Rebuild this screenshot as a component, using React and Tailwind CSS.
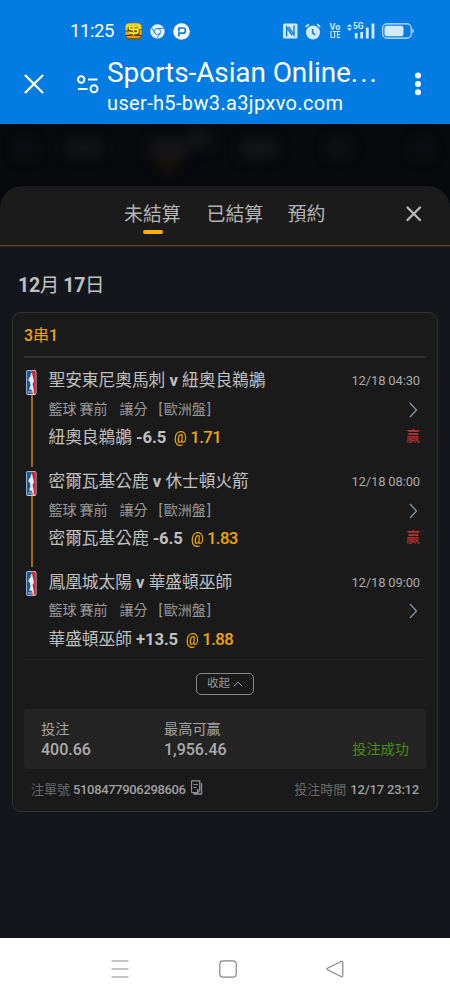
import React from "react";

const legs = [
  { match: "聖安東尼奧馬刺 v 紐奧良鵜鶘", time: "12/18 04:30", team: "紐奧良鵜鶘", line: "-6.5", odds: "1.71", win: true },
  { match: "密爾瓦基公鹿 v 休士頓火箭", time: "12/18 08:00", team: "密爾瓦基公鹿", line: "-6.5", odds: "1.83", win: true },
  { match: "鳳凰城太陽 v 華盛頓巫師", time: "12/18 09:00", team: "華盛頓巫師", line: "+13.5", odds: "1.88", win: false },
];

function NbaLogo() {
  return (
    <svg width="11" height="25" viewBox="0 0 11 25" className="block">
      <rect x="0" y="0" width="10.500" height="25" rx="2.200" fill="#c9d2dd" />
      <path d="M2.300.8H5.500V24.200H2.300Q.7 24.200.7 22.500V2.500Q.7.8 2.300.8z" fill="#1459a6" />
      <path d="M5.500.8H8.300Q9.800.8 9.800 2.500V22.500Q9.800 24.200 8.300 24.200H5.500z" fill="#d4202f" />
      <path d="M4.900 3.500 6.200 3.200 6.700 6 7.700 9.800 7.900 11.500 6.600 14 7.300 17.500 8.300 24H6.900L5.900 19.700 3 19.500 4.500 15.500 4 12 2.300 10.200 3 8 4.500 6.500z" fill="#e8ebef" />
      <path d="M2.400 21v2M3.700 21v2M5 21v2" stroke="#cfdcec" strokeWidth=".6" fill="none" />
    </svg>
  );
}

function StatusBar() {
  return (
    <div className="flex h-[62px] items-center pl-[70px] pr-[36px] text-white">
      <span className="w-[55px] whitespace-nowrap font-['Roboto',sans-serif] text-[18.5px] leading-none tracking-[-0.4px]">11:25</span>
      <svg width="17" height="17" viewBox="0 0 17 17">
        <rect x="0" y="0" width="17" height="16.8" rx="4.5" fill="#7b5a24" />
        <rect x=".5" y=".2" width="16" height="14.3" rx="4" fill="#f5d51e" />
        <path d="M1 8.5h15v3q0 3-3 3H4q-3 0-3-3z" fill="#eaa51d" />
        <path d="M12.500 4H5.800q-2 0-2 1.700t2 1.800h5.500q2 0 2 1.900t-2 2H4" stroke="#43310b" strokeWidth="2.500" fill="none" />
        <path d="M12.500 3.600H5.800q-1.600 0-1.600 1.500t1.600 1.600h5.500q1.600 0 1.600 1.800t-1.600 1.800H4" stroke="#ffed32" strokeWidth="1.700" fill="none" />
        <path d="M8.500 2v10.500" stroke="#ffed32" strokeWidth="1.200" />
        <path d="M.4 8h3M14 6.800h2.500M.5 12.500h4M12.500 12.500h4" stroke="#3b2b0b" />
      </svg>
      <svg className="ml-[8px]" width="15" height="15" viewBox="0 0 15 15">
        <circle cx="7.5" cy="7.5" r="7.2" fill="#eef7ff" />
        <circle cx="7.5" cy="7.5" r="3.100" fill="none" stroke="#087de5" strokeWidth=".9" />
        <path d="M7.500 4.400h6M4.800 9 1.900 4M10.200 9.100l-3 5" stroke="#087de5" strokeWidth=".9" />
      </svg>
      <svg className="ml-[8px]" width="17" height="17" viewBox="0 0 17 17">
        <circle cx="8.5" cy="8.5" r="8.3" fill="#fff" />
        <path d="M5.900 13.300V10.200H10.300Q12.300 10.200 12.300 8.200V7Q12.300 5 10.300 5H5.900v3.600" stroke="#087de5" strokeWidth="1.700" fill="none" />
      </svg>
      <div className="ml-auto flex h-[20px] items-center text-[#d3e9fc]">
        <svg width="15" height="16" viewBox="0 0 15 16">
          <rect x="0" y=".5" width="14.5" height="15" rx="1.500" fill="currentColor" />
          <path d="M3.600 13.500V4l5.500 8.300M11 2.500V12L5.500 3.700" stroke="#087de5" strokeWidth="1.400" fill="none" />
        </svg>
        <svg className="ml-[7px]" width="16" height="17" viewBox="0 0 16 17">
          <circle cx="8" cy="9.500" r="7" fill="currentColor" />
          <path d="m.8 4 3-2.800M15.200 4l-3-2.800" stroke="currentColor" strokeWidth="1.700" />
          <path d="M7.600 6v4l2.600 1.800" stroke="#087de5" strokeWidth="1.500" fill="none" />
        </svg>
        <div className="ml-[8px] flex w-[12px] flex-col items-center font-['Roboto',sans-serif] font-bold">
          <span className="text-[9px] leading-[8px]">Vo</span>
          <span className="origin-center scale-y-[1.250] text-[7px] leading-[8px] tracking-[-0.500px]">LTE</span>
        </div>
        <div className="relative ml-[6px] h-[16px] w-[28px]">
          <svg width="28" height="16" viewBox="0 0 28 16">
            <path d="M0 3.800 2.500 1 5 3.800zM0 5.200 2.500 8 5 5.200z" fill="currentColor" />
            <path d="M9.200 10v5.500M14.700 9v6.500M20.300 4.500v11M26 .5v15" stroke="currentColor" strokeWidth="2.800" />
          </svg>
          <span className="absolute left-[6px] top-[-1px] font-['Roboto',sans-serif] text-[8.500px] font-bold leading-[9px] tracking-[-0.200px]">5G</span>
        </div>
        <svg className="ml-[7px]" width="32" height="16" viewBox="0 0 32 16">
          <rect x=".7" y=".9" width="28.500" height="14.200" rx="4" stroke="currentColor" strokeWidth="1.100" fill="none" />
          <rect x="2.500" y="2.700" width="19" height="10.600" rx="2.200" fill="currentColor" />
          <path d="M30.500 5.500q1.300.7 1.300 2.500t-1.300 2.500z" fill="currentColor" />
        </svg>
      </div>
    </div>
  );
}

function BrowserBar() {
  return (
    <div className="flex h-[62px] text-white">
      <svg className="ml-[24px] mt-[12px] shrink-0" width="20" height="20" viewBox="0 0 20 20">
        <path d="m1 1 18 18M19 1 1 19" stroke="white" strokeWidth="2.300" />
      </svg>
      <svg className="ml-[33px] mt-[13px] shrink-0" width="22" height="19" viewBox="0 0 22 19">
        <g fill="none" stroke="white" strokeWidth="2">
          <circle cx="4.200" cy="4.500" r="3.200" />
          <path d="M11 4.500h9.500M1 14h9.500" />
          <circle cx="17" cy="13.800" r="3.500" />
        </g>
      </svg>
      <div className="ml-[8px] w-[280px] shrink-0 whitespace-nowrap font-['Roboto',sans-serif]">
        <div className="h-[29px] text-[28px] leading-[22px] tracking-[-0.100px]">Sports-Asian Online<span className="tracking-[2px]">...</span></div>
        <div className="text-[20px] leading-[24px] tracking-[0.350px]">user-h5-bw3.a3jpxvo.com</div>
      </div>
      <svg className="ml-[27px] mt-[10px] shrink-0" width="8" height="24" viewBox="0 0 8 24">
        <circle cx="4" cy="3.500" r="3" fill="white" />
        <circle cx="4" cy="12" r="3" fill="white" />
        <circle cx="4" cy="20.300" r="3" fill="white" />
      </svg>
    </div>
  );
}

function Leg({ leg, last }) {
  return (
    <div className="flex h-[100.700px]">
      <div className="flex w-[24.500px] flex-col items-start pl-[2px] pt-[4px]">
        <NbaLogo />
        {!last && <div className="ml-[5px] h-[72px] w-[2px] bg-[#9a6b12]" />}
      </div>
      <div className="flex-1 whitespace-nowrap">
        <div className="flex h-[29px] items-center justify-between pr-[6px] pt-px">
          <span className="text-[16.700px] text-[#c0c0c0]">{leg.match.split(" v ")[0]}<b> v </b>{leg.match.split(" v ")[1]}</span>
          <span className="text-[13px] tracking-[-0.150px] text-[#a8a8a8]">{leg.time}</span>
        </div>
        <div className="flex h-[28px] items-center pt-px text-[14px] text-[#9b9b9b]">
          <span className="w-[31px]">籃球</span>
          <span className="w-[40px]">賽前</span>
          <span className="w-[39px]">讓分</span>
          <span>[</span><span className="mx-[1.500px]">歐洲盤</span><span>]</span>
          <svg className="ml-auto mr-[8px] mt-px" width="9" height="16" viewBox="0 0 9 16">
            <path d="m1 1 6.500 7L1 15" stroke="#929aa8" strokeWidth="1.200" fill="none" />
          </svg>
        </div>
        <div className="flex h-[28px] items-center pr-[6px] pt-[2px] text-[16.700px] text-[#c0c0c0]">
          <span>{leg.team}</span>
          <span className="ml-[4px] font-bold tracking-[-0.100px]">{leg.line}</span>
          <span className="ml-[8px] font-medium tracking-[-0.550px] text-[#efa50b]"><span className="inline-block w-[12.500px] origin-left scale-x-[0.850]">@</span> {leg.odds}</span>
          {leg.win && <span className="mb-[3px] ml-auto text-[14px] text-[#c8362f]">贏</span>}
        </div>
      </div>
    </div>
  );
}

export default function App() {
  return (
    <div className="flex h-[1000px] w-[450px] flex-col overflow-hidden bg-[#15161b] font-['Roboto','Noto_Sans_CJK_TC',sans-serif]">
      <header className="h-[124px] shrink-0 bg-[#027be3]">
        <StatusBar />
        <BrowserBar />
      </header>
      <div className="flex h-[62px] shrink-0 items-start overflow-hidden bg-[#08090d] pt-[16px]">
        <div className="ml-[16px] h-[18px] w-[18px] bg-[#0e0f13] blur-[6px]" />
        <div className="ml-[31px] h-[16px] w-[38px] bg-[#131417] blur-[6px]" />
        <div className="ml-[47px] h-[18px] w-[38px] bg-[#17171b] blur-[6px]">
          <div className="ml-[8px] mt-[20px] h-[10px] w-[20px] bg-[#1d1508]" />
        </div>
        <div className="mt-[-10px] h-[18px] w-[22px] bg-[#141519] blur-[6px]" />
        <div className="ml-[30px] h-[18px] w-[38px] bg-[#131417] blur-[6px]" />
        <div className="ml-[49px] h-[16px] w-[24px] bg-[#111215] blur-[6px]" />
        <div className="ml-[62px] h-[18px] w-[18px] bg-[#0e0f13] blur-[6px]" />
      </div>
      <div className="shrink-0 bg-[#08090d]">
        <div className="flex h-[59px] rounded-t-[22px] bg-[#1b1b1b] text-[18.900px] leading-[58px] text-[#b4b4b4]">
          <div className="ml-[124px] flex w-[82.500px] flex-col">
            <span className="h-[44px]">未結算</span>
            <span className="ml-[19px] h-[3.500px] w-[20px] rounded-full bg-[#fdb000]" />
          </div>
          <span className="w-[81px]">已結算</span>
          <span>預約</span>
          <svg className="ml-[81px] mt-[20px]" width="16" height="16" viewBox="0 0 16 16">
            <path d="m1.500 1.500 12.500 12.500M14 1.500 1.500 14" stroke="#b8b8b8" strokeWidth="2.300" strokeLinecap="round" />
          </svg>
        </div>
        <div className="h-px bg-[#664610] shadow-[0_1px_0_#2f2414]" />
      </div>
      <main className="h-[692px] shrink-0 px-[12px]">
        <h1 className="flex h-[66px] items-center whitespace-nowrap pl-[6px] pt-[13px] text-[19.500px] text-[#c0c0c0]"><b className="tracking-[-0.300px]">12</b>月<b className="ml-[4px] tracking-[-0.300px]">17</b>日</h1>
        <section className="h-[500px] rounded-[9px] border border-[#303238] bg-[#1a1a1a] px-[11px]">
          <div className="h-[45px] border-b-2 border-[#303030] text-[16px] leading-[46px] text-[#efa50b]"><span className="font-medium">3</span>串<span className="font-medium">1</span></div>
          <div className="h-[302px] border-b border-[#1f1f1f] pt-[8px]">
            {legs.map((leg, i) => <Leg key={leg.match} leg={leg} last={i === 2} />)}
          </div>
          <div className="flex h-[49px] justify-center pt-[13px]">
            <button className="flex h-[22px] w-[58px] items-center justify-center gap-[3px] rounded-[5px] border border-[#898989] text-[11.500px] text-[#999]">
              收起
              <svg width="10" height="6" viewBox="0 0 10 6"><path d="m.8 5.200 4.200-4 4.200 4" stroke="#a0a6b0" fill="none" /></svg>
            </button>
          </div>
          <div className="flex h-[60px] whitespace-nowrap rounded-[4px] bg-[#242424] pl-[17px] pr-[17px] pt-[10px] text-[14.200px] leading-[20px] text-[#a4a4a4]">
            <div className="w-[123px]">
              <div>投注</div>
              <div className="text-[16px] font-medium leading-[21px] text-[#ababab]">400.66</div>
            </div>
            <div>
              <div>最高可贏</div>
              <div className="text-[16px] font-medium leading-[21px] text-[#ababab]">1,956.46</div>
            </div>
            <div className="ml-auto pt-[20px] text-[#46910f]">投注成功</div>
          </div>
          <div className="flex h-[41px] items-center whitespace-nowrap pl-[7px] pr-[7px] text-[13px] text-[#696969]">
            <span>注單號</span>
            <span className="ml-[3px] font-medium tracking-[-0.350px] text-[#a0a0a0]">5108477906298606</span>
            <svg className="mb-[5px] ml-[5px]" width="12" height="15" viewBox="0 0 12 15">
              <path d="M1.500.8h7.200v9.500L7 12.700H1.500q-1 0-1-1v-10q0-1 1-1zM10.500 3v11H2.500" stroke="#8d8f94" strokeWidth="1.300" fill="none" />
              <path d="M2.500 4.500h4.500M2.500 7.500h3M6.500 12v-2.200h2.200" stroke="#8d8f94" strokeWidth="1.100" fill="none" />
            </svg>
            <span className="ml-auto">投注時間</span>
            <span className="ml-[4px] font-medium tracking-[-0.200px] text-[#a0a0a0]">12/17 23:12</span>
          </div>
        </section>
      </main>
      <nav className="flex h-[62px] shrink-0 items-center bg-white pl-[111px]">
        <svg width="18" height="18" viewBox="0 0 18 18"><path d="M.5 1h17M.5 9h17M.5 17h17" stroke="#858585" strokeWidth="1.200" /></svg>
        <svg className="ml-[90px]" width="18" height="18" viewBox="0 0 18 18"><rect x=".8" y=".8" width="16.400" height="16.400" rx="3.500" stroke="#858585" strokeWidth="1.200" fill="none" /></svg>
        <svg className="ml-[89px]" width="18" height="18" viewBox="0 0 18 18"><path d="M15 1.500 1.500 8.200q-1.200.8 0 1.600L15 16.500q1.800.8 1.800-1v-13q0-1.800-1.800-1z" stroke="#858585" strokeWidth="1.200" fill="none" /></svg>
      </nav>
    </div>
  );
}
